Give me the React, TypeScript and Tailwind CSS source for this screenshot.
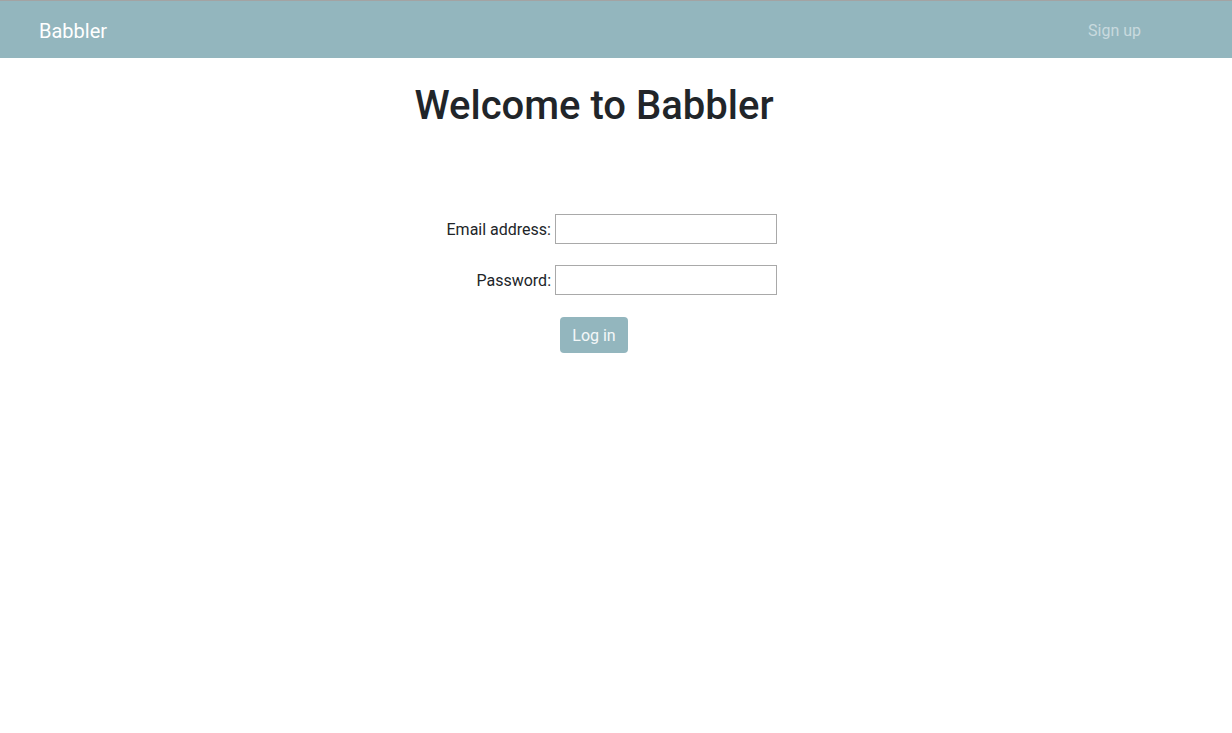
export default function App() {
    return (
        <div className="min-h-[733px] bg-white font-['Roboto','Liberation_Sans',sans-serif] text-[#212529]">
            <div className="h-px bg-[#a3a3a3]" />
            <nav className="flex h-[57px] items-center justify-between bg-[#93b6be] pl-[39px] pr-[91px] pt-[3px]">
                <span className="text-[20px] leading-[30px] text-white">Babbler</span>
                <span className="text-[16px] leading-6 text-white/50">Sign up</span>
            </nav>

            <main className="flex w-[1188px] flex-col items-center">
                <h1 className="mt-[24px] text-[40px] font-medium leading-[48px]">
                    Welcome to Babbler
                </h1>

                <form className="mt-[84px] flex flex-col items-center">
                    <div className="grid grid-cols-[140px_222px] items-center gap-x-[4px] gap-y-[21px] text-[16px] leading-6">
                        <label htmlFor="email" className="pt-[2px] text-right">
                            Email address:
                        </label>
                        <input
                            id="email"
                            type="email"
                            className="h-[30px] border border-[#a9a9a9] bg-white px-1 outline-none"
                        />
                        <label htmlFor="password" className="pt-[2px] text-right">
                            Password:
                        </label>
                        <input
                            id="password"
                            type="password"
                            className="h-[30px] border border-[#a9a9a9] bg-white px-1 outline-none"
                        />
                    </div>
                    <button
                        type="submit"
                        className="mt-[22px] h-[36px] rounded-[4px] bg-[#93b6be] px-3 pt-[2px] text-[16px] text-white/90"
                    >
                        Log in
                    </button>
                </form>
            </main>
        </div>
    );
}
